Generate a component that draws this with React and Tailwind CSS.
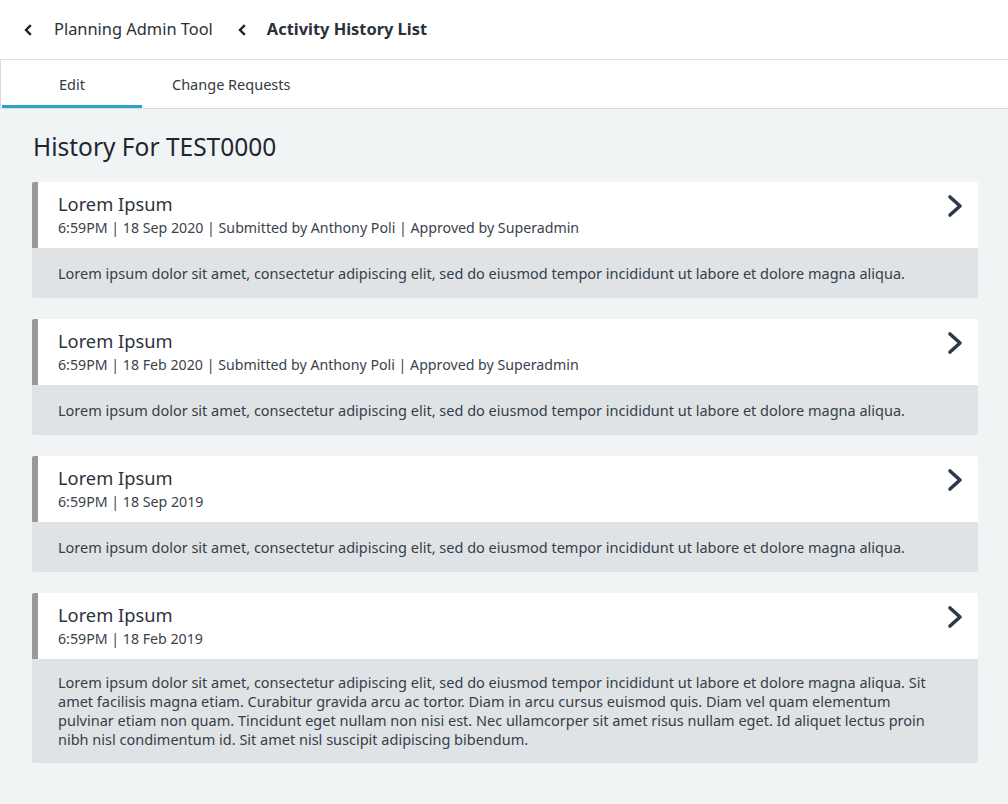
const entries = [
  {
    title: 'Lorem Ipsum',
    meta: '6:59PM | 18 Sep 2020 | Submitted by Anthony Poli | Approved by Superadmin',
    body: 'Lorem ipsum dolor sit amet, consectetur adipiscing elit, sed do eiusmod tempor incididunt ut labore et dolore magna aliqua.',
  },
  {
    title: 'Lorem Ipsum',
    meta: '6:59PM | 18 Feb 2020 | Submitted by Anthony Poli | Approved by Superadmin',
    body: 'Lorem ipsum dolor sit amet, consectetur adipiscing elit, sed do eiusmod tempor incididunt ut labore et dolore magna aliqua.',
  },
  {
    title: 'Lorem Ipsum',
    meta: '6:59PM | 18 Sep 2019',
    body: 'Lorem ipsum dolor sit amet, consectetur adipiscing elit, sed do eiusmod tempor incididunt ut labore et dolore magna aliqua.',
  },
  {
    title: 'Lorem Ipsum',
    meta: '6:59PM | 18 Feb 2019',
    body: 'Lorem ipsum dolor sit amet, consectetur adipiscing elit, sed do eiusmod tempor incididunt ut labore et dolore magna aliqua. Sit amet facilisis magna etiam. Curabitur gravida arcu ac tortor. Diam in arcu cursus euismod quis. Diam vel quam elementum pulvinar etiam non quam. Tincidunt eget nullam non nisi est. Nec ullamcorper sit amet risus nullam eget. Id aliquet lectus proin nibh nisl condimentum id. Sit amet nisl suscipit adipiscing bibendum.',
  },
]

function BackChevron({ className }) {
  return (
    <svg viewBox="0 0 10 12" className={className} fill="none" stroke="currentColor" strokeWidth="2.4" strokeLinecap="square">
      <polyline points="7,2 3,6 7,10" />
    </svg>
  )
}

function NextChevron({ className }) {
  return (
    <svg viewBox="0 0 18 24" className={className} fill="none" stroke="currentColor" strokeWidth="3.6" strokeLinecap="round" strokeLinejoin="round">
      <polyline points="4,3 14,12 4,21" />
    </svg>
  )
}

function HistoryCard({ title, meta, body }) {
  return (
    <div className="overflow-hidden rounded-[2px]">
      <div className="flex h-[66px] items-start justify-between border-l-[6px] border-[#999999] bg-white pl-[20px] pr-[14px]">
        <div className="pt-[10px]">
          <div className="text-[18.3px] leading-[24px] text-[#2b3440]">{title}</div>
          <div className="mt-[2px] text-[14.2px] leading-[20px] text-[#3a424c]">{meta}</div>
        </div>
        <NextChevron className="mt-[12px] h-[24px] w-[18px] text-[#2c3a4b]" />
      </div>
      <div className="flex min-h-[50px] items-center bg-[#dfe3e6] py-[14px] pl-[26px] pr-[38px] text-[14.5px] leading-[19px] text-[#363e48]">
        <p>{body}</p>
      </div>
    </div>
  )
}

export default function App() {
  return (
    <div className="min-h-[804px] bg-[#f0f4f5] font-['Noto_Sans',sans-serif]">
      <header className="flex h-[60px] items-center border-b border-[#dde1e4] bg-white pl-[23px]">
        <BackChevron className="h-[12px] w-[10px] text-[#1f242b]" />
        <span className="ml-[21px] text-[16.4px] text-[#2b3038]">Planning Admin Tool</span>
        <BackChevron className="ml-[24px] h-[12px] w-[10px] text-[#1f242b]" />
        <span className="ml-[20px] text-[16.4px] font-bold text-[#2b3038]">Activity History List</span>
      </header>

      <nav className="flex h-[49px] items-stretch border-b border-l border-[#d6dbde] bg-white pl-[1px]">
        <button className="min-w-[140px] border-b-[3px] border-[#2aa3c6] px-[30px] pt-[4px] text-[14.5px] text-[#333a42]">
          Edit
        </button>
        <button className="min-w-[140px] border-b-[3px] border-transparent px-[30px] pt-[4px] text-[14.5px] text-[#333a42]">
          Change Requests
        </button>
      </nav>

      <main className="px-[32px] pb-[40px] pt-[22px] pr-[30px]">
        <h1 className="pl-[1px] text-[24.5px] leading-[32px] text-[#1f2630]">History For TEST0000</h1>
        <div className="mt-[19px] flex flex-col gap-[21px]">
          {entries.map((e, i) => (
            <HistoryCard key={i} {...e} />
          ))}
        </div>
      </main>
    </div>
  )
}
